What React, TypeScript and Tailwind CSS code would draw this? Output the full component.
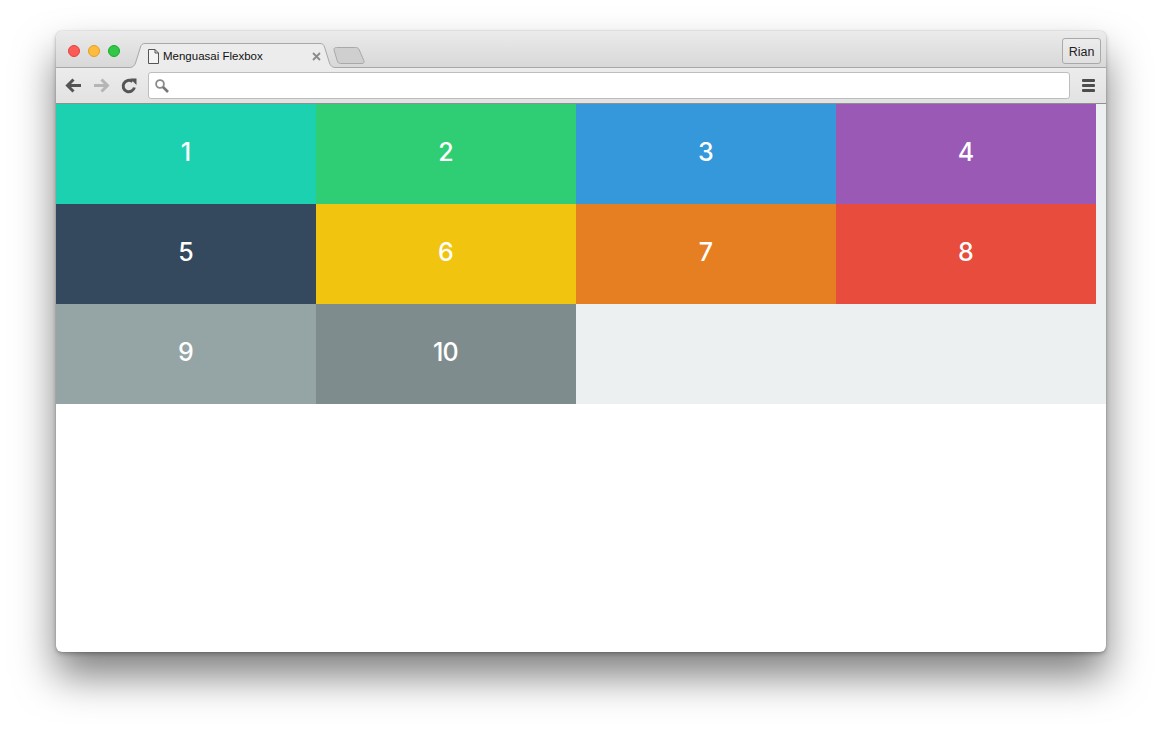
const boxes = [
  { n: 1, bg: 'bg-[#1cd1af]' },
  { n: 2, bg: 'bg-[#2fce75]' },
  { n: 3, bg: 'bg-[#3498db]' },
  { n: 4, bg: 'bg-[#9b59b6]' },
  { n: 5, bg: 'bg-[#34495e]' },
  { n: 6, bg: 'bg-[#f1c40f]' },
  { n: 7, bg: 'bg-[#e67e22]' },
  { n: 8, bg: 'bg-[#e74c3c]' },
  { n: 9, bg: 'bg-[#95a5a6]' },
  { n: 10, bg: 'bg-[#7f8c8d]' },
]

function Tab() {
  return (
    <div className="relative h-[25px] w-[210px] shrink-0">
      <svg className="absolute inset-0" width="210" height="25" viewBox="0 0 210 25">
        <path
          d="M0 24 H2 C5 24 6.5 22.5 7.5 20 L12.5 4 C13.2 1.6 14.5 0.5 17 0.5 H192 C194.5 0.5 195.8 1.6 196.5 4 L201.5 20 C202.5 22.5 204 24 207 24 H210 V25 H0 Z"
          fill="#ececec"
        />
        <path
          d="M0 24.5 H2 C5 24.5 6.5 22.5 7.5 20 L12.5 4 C13.2 1.6 14.5 0.5 17 0.5 H192 C194.5 0.5 195.8 1.6 196.5 4 L201.5 20 C202.5 22.5 204 24.5 207 24.5 H210"
          fill="none"
          stroke="#a8a8a8"
        />
      </svg>
      <div className="relative flex h-full items-center pb-[1px] pl-[20px] pr-[16px] pt-[3px]">
        <svg width="11" height="15" viewBox="0 0 11 15" className="shrink-0">
          <path d="M0.5 0.5 H7 L10.5 4 V14.5 H0.5 Z M7 0.5 V4 H10.5" fill="#f4f4f4" stroke="#555" />
        </svg>
        <span className="ml-[4px] text-[11.5px] text-[#111]">Menguasai Flexbox</span>
        <svg width="9" height="9" viewBox="0 0 9 9" className="ml-auto mr-[1px] shrink-0">
          <path d="M1 1 L8 8 M8 1 L1 8" stroke="#8a8a8a" strokeWidth="1.8" />
        </svg>
      </div>
    </div>
  )
}

function NewTab() {
  return (
    <svg width="32" height="18" viewBox="0 0 32 18" className="ml-[-5px] mb-[3px] shrink-0">
      <path
        d="M3.5 0.5 H22.5 C24.5 0.5 25.5 1.2 26.3 3 L30.8 13.5 C31.5 15.4 30.6 16.5 29 16.5 H7.5 C5.8 16.5 4.8 15.6 4.3 14 L1 3 C0.6 1.4 1.8 0.5 3.5 0.5 Z"
        fill="#cfcfcf"
        stroke="#a9a9a9"
      />
    </svg>
  )
}

export default function App() {
  return (
    <div className="h-[732px] w-[1162px] overflow-hidden bg-white pl-[56px] pt-[31px] font-['Liberation_Sans',Arial,sans-serif]">
      <div className="relative flex h-[621px] w-[1050px] flex-col rounded-[6px] bg-white shadow-[0_0_1px_rgba(0,0,0,0.4),0_2px_4px_rgba(0,0,0,0.25),0_24px_40px_rgba(0,0,0,0.5)]">
        <div className="flex h-[37px] shrink-0 items-end rounded-t-[6px] border-b border-[#a8a8a8] bg-gradient-to-b from-[#ebebeb] to-[#d8d8d8] pl-[72px]">
          <div className="mb-[-1px] flex items-end">
            <Tab />
            <NewTab />
          </div>
          <button className="mb-[3px] ml-auto mr-[5px] h-[26px] w-[39px] rounded-[3px] border border-[#a9a9a9] bg-gradient-to-b from-[#ececec] to-[#e0e0e0] pt-[2px] text-[12.5px] text-[#222]">
            Rian
          </button>
        </div>

        <div className="flex h-[36px] shrink-0 items-center border-b border-[#8f8f8f] bg-gradient-to-b from-[#ececec] to-[#e2e2e2] pl-[9px] pr-[11px]">
          <svg width="17" height="15" viewBox="0 0 17 15" className="shrink-0">
            <path d="M16 7.5 H3 M8.5 1.5 L2.5 7.5 L8.5 13.5" fill="none" stroke="#555" strokeWidth="3" />
          </svg>
          <svg width="17" height="15" viewBox="0 0 17 15" className="ml-[11px] shrink-0">
            <path d="M1 7.5 H14 M8.5 1.5 L14.5 7.5 L8.5 13.5" fill="none" stroke="#b5b5b5" strokeWidth="3" />
          </svg>
          <svg width="16" height="16" viewBox="0 0 16 16" className="ml-[11px] shrink-0">
            <path d="M13.4 9.5 A5.7 5.7 0 1 1 11.4 3.6" fill="none" stroke="#555" strokeWidth="3" />
            <path d="M9 0.5 H15.5 V7 Z" fill="#555" />
          </svg>
          <div className="ml-[11px] flex h-[27px] w-[922px] shrink-0 items-center rounded-[3px] border border-[#bdbdbd] bg-white pl-[6px]">
            <svg width="14" height="14" viewBox="0 0 14 14">
              <circle cx="5" cy="5" r="3.9" fill="none" stroke="#8a8a8a" strokeWidth="1.8" />
              <path d="M8 8 L13 13" stroke="#777" strokeWidth="2.6" />
            </svg>
          </div>
          <div className="ml-auto flex w-[13px] flex-col gap-[2px]">
            <span className="h-[3px] rounded-[1px] bg-[#4d4d4d]" />
            <span className="h-[3px] rounded-[1px] bg-[#4d4d4d]" />
            <span className="h-[3px] rounded-[1px] bg-[#4d4d4d]" />
          </div>
        </div>

        <div className="flex h-[300px] w-full flex-wrap bg-[#ecf0f1]">
          {boxes.map((box) => (
            <div
              key={box.n}
              className={`flex h-[100px] w-[260px] items-center justify-center pb-[2px] pr-[1px] font-['Inter',sans-serif] text-[25px] font-medium tracking-[-0.8px] text-white ${box.bg}`}
            >
              {box.n}
            </div>
          ))}
        </div>

        <div className="absolute left-[12px] top-[14px] flex gap-[8px]">
          <span className="h-[12px] w-[12px] rounded-full border border-[#e0443e] bg-[#fc5b57]" />
          <span className="h-[12px] w-[12px] rounded-full border border-[#dea123] bg-[#fdbb40]" />
          <span className="h-[12px] w-[12px] rounded-full border border-[#1aab29] bg-[#33c748]" />
        </div>
      </div>
    </div>
  )
}
